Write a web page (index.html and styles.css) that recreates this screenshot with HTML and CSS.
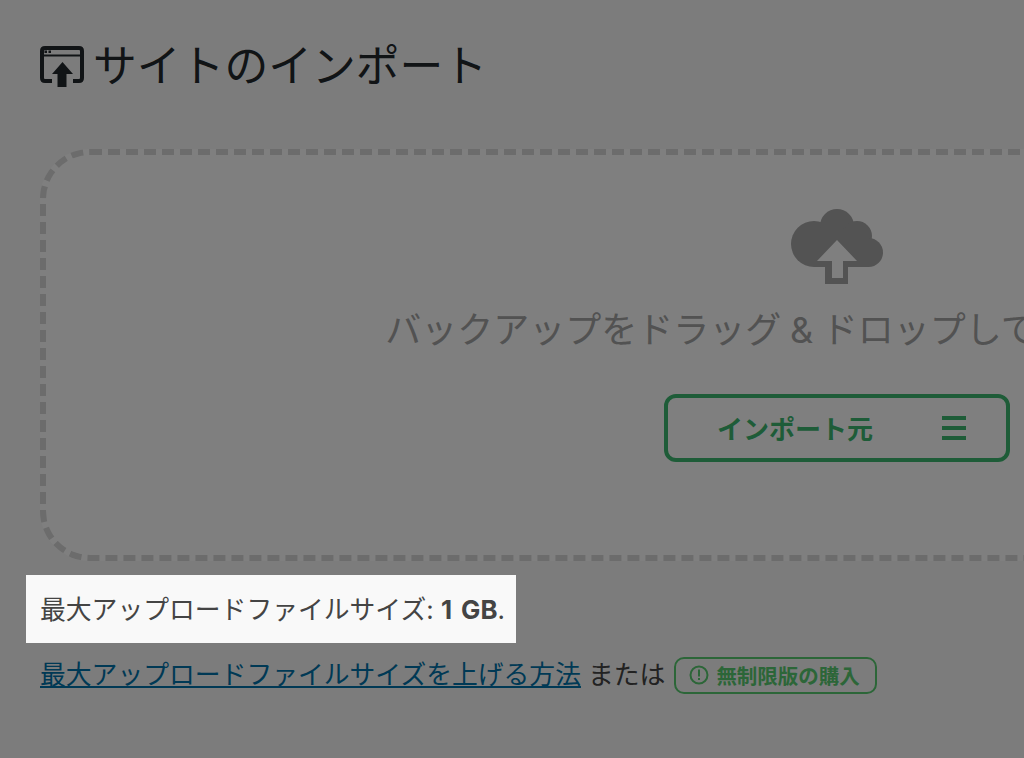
FILE: index.html
```html
<!DOCTYPE html>
<html lang="ja">
<head>
    <meta charset="utf-8">
    <title>サイトのインポート</title>
    <link rel="stylesheet" href="styles.css">
</head>
<body>
    <div class="overlay"></div>

    <div class="page">
        <h1 class="page-title">
            <svg class="title-icon" viewBox="0 0 44 41" width="44" height="41">
                <path fill="none" stroke="currentColor" stroke-width="4" d="M12 35H5q-3 0-3-3V5q0-3 3-3h34q3 0 3 3v27q0 3-3 3h-6"/>
                <path fill="none" stroke="currentColor" stroke-width="2" d="M3 9.500H41"/>
                <path fill="currentColor" d="M4.500 4.500h2.500v2.500h-2.500zM8.500 4.500h2.500v2.500h-2.500z"/>
                <path fill="currentColor" d="M22.500 16 33 28H26.500V41H17.500V28H12z"/>
            </svg>
            <span>サイトのインポート</span>
        </h1>

        <div class="dropzone">
            <svg class="cloud-icon" viewBox="0 0 92 75" width="92" height="75">
                <g fill="#a6a6a6">
                    <circle cx="23" cy="35" r="23"/>
                    <circle cx="46" cy="17" r="17"/>
                    <circle cx="66" cy="27" r="15"/>
                    <circle cx="77.500" cy="43.500" r="14.500"/>
                    <rect x="23" y="20" width="55" height="38"/>
                    <rect x="34" y="50" width="23" height="25"/>
                </g>
                <path fill="#fff" d="M46 31 66 52H52V69H41V52H26z"/>
            </svg>
            <p class="drop-text">バックアップをドラッグ &amp; ドロップしてインポートする</p>
            <button class="import-btn">
                <span>インポート元</span>
                <span class="burger"><i></i><i></i><i></i></span>
            </button>
        </div>

        <div class="size-note">最大アップロードファイルサイズ: <b>1 GB</b>.</div>

        <div class="help-line">
            <a href="#">最大アップロードファイルサイズを上げる方法</a>
            <span>または</span>
            <a href="#" class="buy-badge">
                <svg viewBox="0 0 20 20" width="20" height="20">
                    <circle cx="10" cy="10" r="8.500" fill="none" stroke="currentColor" stroke-width="2"/>
                    <path fill="currentColor" d="M9 4.500h2v7H9zM9 13h2v2H9z"/>
                </svg>
                無制限版の購入
            </a>
        </div>
    </div>
</body>
</html>
```

FILE: styles.css
```css
* {
    margin: 0;
    padding: 0;
    box-sizing: border-box;
}
html, body {
    height: 100%;
    overflow: hidden;
}
body {
    background: #f9f9f9;
    color: #444;
    font-family: Inter, "Noto Sans CJK JP", sans-serif;
    font-size: 25.8px;
}
.overlay {
    position: fixed;
    inset: 0;
    background: rgba(0, 0, 0, 0.5);
    z-index: 10;
}
.page {
    width: 1634px;
    padding-left: 40px;
}
.page-title {
    display: flex;
    align-items: center;
    gap: 9px;
    height: 126px;
    color: #23282d;
    font-size: 43.8px;
    font-weight: 400;
}
.title-icon {
    display: block;
    flex: none;
    margin-top: 7px;
}
.dropzone {
    display: flex;
    flex-direction: column;
    align-items: center;
    height: 412px;
    padding-top: 54px;
    margin-top: 23px;
    background: #fff;
    border: 6px dashed #d8d8d8;
    border-radius: 50px;
}
.cloud-icon {
    display: block;
    flex: none;
}
.drop-text {
    margin-top: 21px;
    color: #a4a4a4;
    font-size: 36px;
    line-height: 50px;
    word-spacing: -1.5px;
    white-space: nowrap;
}
.import-btn {
    display: flex;
    flex: none;
    align-items: center;
    justify-content: space-between;
    width: 346px;
    height: 68px;
    margin-top: 39px;
    padding: 0 40px 2px 49px;
    background: transparent;
    border: 4px solid #3cb870;
    border-radius: 12px;
    color: #3cb870;
    font-family: inherit;
    font-size: 26px;
    font-weight: 700;
}
.burger {
    display: flex;
    flex-direction: column;
    gap: 6px;
    width: 24px;
    margin-top: 2px;
}
.burger i {
    display: block;
    height: 4px;
    background: #3cb870;
}
.size-note {
    position: relative;
    z-index: 20;
    display: inline-block;
    margin: 14px 0 0 -14px;
    padding: 15px 11px 13px 14px;
    background: #f9f9f9;
    line-height: 40px;
    white-space: nowrap;
}
.size-note b {
    word-spacing: 3px;
}
.help-line {
    display: flex;
    align-items: center;
    gap: 7px;
    height: 40px;
    margin-top: 9px;
}
.help-line a {
    color: #0073aa;
}
.help-line .buy-badge {
    display: flex;
    align-items: center;
    gap: 7px;
    height: 37px;
    margin: 6px 0 0 2px;
    padding: 0 15px 0 13px;
    border: 2px solid #58cc70;
    border-radius: 10px;
    color: #58cc70;
    font-size: 20.5px;
    font-weight: 700;
    text-decoration: none;
}
```
